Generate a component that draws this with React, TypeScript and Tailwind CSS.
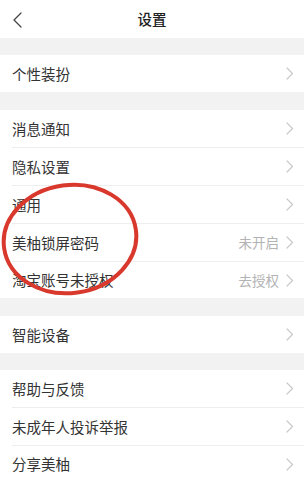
import React from "react";

type Item = { label: string; value?: string; h: number };

const groups: { gap: number; items: Item[] }[] = [
  { gap: 17, items: [{ label: "个性装扮", h: 37 }] },
  {
    gap: 18,
    items: [
      { label: "消息通知", h: 37 },
      { label: "隐私设置", h: 38 },
      { label: "通用", h: 38 },
      { label: "美柚锁屏密码", value: "未开启", h: 38 },
      { label: "淘宝账号未授权", value: "去授权", h: 37 },
    ],
  },
  { gap: 18, items: [{ label: "智能设备", h: 37 }] },
  {
    gap: 17,
    items: [
      { label: "帮助与反馈", h: 37 },
      { label: "未成年人投诉举报", h: 38 },
      { label: "分享美柚", h: 37 },
    ],
  },
];

function Chevron() {
  return (
    <svg width="8" height="13" viewBox="0 0 8 13" fill="none">
      <polyline points="1,1 6.5,6.5 1,12" stroke="#c9c9c9" strokeWidth="1.2" strokeLinecap="round" strokeLinejoin="round" />
    </svg>
  );
}

export default function App() {
  return (
    <div
      className="relative w-[304px] h-[482px] overflow-hidden bg-[#f2f2f2]"
      style={{ fontFamily: '"Noto Sans CJK SC", "Noto Sans", sans-serif' }}
    >
      <div className="relative flex h-[38px] items-center justify-center bg-white">
        <svg className="absolute left-[12px] top-[12px]" width="11" height="16" viewBox="0 0 11 16" fill="none">
          <polyline points="9,1 2,8 9,15" stroke="#444" strokeWidth="1.3" strokeLinecap="round" strokeLinejoin="round" />
        </svg>
        <span className="text-[14.5px] font-medium text-[#222]">设置</span>
      </div>
      {groups.map((g, gi) => (
        <div key={gi} className="flex flex-col" style={{ paddingTop: g.gap }}>
          {g.items.map((it, i) => (
            <div key={it.label} className="flex bg-white pl-3" style={{ height: it.h }}>
              <div
                className={`flex flex-1 items-center pr-[10px] ${i > 0 ? "border-t border-[#eeeeee]" : ""}`}
              >
                <span className="flex-1 text-[14.5px] text-[#333]">{it.label}</span>
                {it.value && <span className="mr-[7px] text-[13.5px] text-[#b3b3b3]">{it.value}</span>}
                <Chevron />
              </div>
            </div>
          ))}
        </div>
      ))}
      <svg className="pointer-events-none absolute left-0 top-0" width="304" height="482" viewBox="0 0 304 482">
        <ellipse
          cx="70"
          cy="239"
          rx="66.5"
          ry="54"
          transform="rotate(-8 70 239)"
          fill="none"
          stroke="#d9382d"
          strokeWidth="4"
        />
      </svg>
    </div>
  );
}
